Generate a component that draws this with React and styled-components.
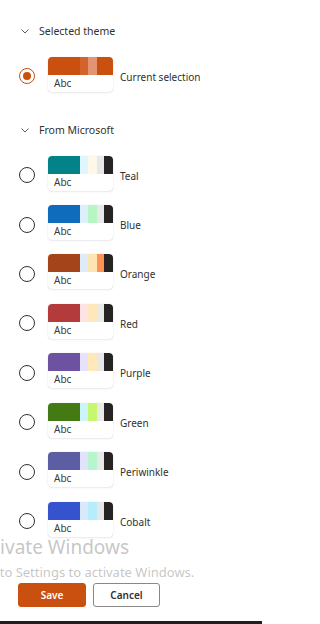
import React from "react";
import styled, { createGlobalStyle } from "styled-components";

const Global = createGlobalStyle`
  html, body {
    margin: 0;
    padding: 0;
    background: #ffffff;
    overflow: hidden;
  }
  body {
    font-family: "Noto Sans", "Open Sans", sans-serif;
    color: #323130;
  }
`;

const Page = styled.div`
  position: relative;
  width: 262px;
  height: 624px;
  overflow: hidden;
  background: #fff;
  display: flex;
  flex-direction: column;
`;

const Body = styled.div`
  flex: 1;
  padding: 21px 0 0 0;
`;

const SectionHead = styled.div`
  display: flex;
  align-items: center;
  height: 20px;
  padding-left: 20px;
  gap: 9px;
  font-size: 10.5px;
  color: #323130;
  margin-top: ${(p) => p.$top || 0}px;
`;

const Chevron = () => (
  <svg width="10" height="10" viewBox="0 0 10 10">
    <path d="M1.5 3.5 L5 7 L8.5 3.5" fill="none" stroke="#605e5c" strokeWidth="1" />
  </svg>
);

const List = styled.div`
  display: flex;
  flex-direction: column;
  margin-top: ${(p) => p.$top || 0}px;
`;

const Row = styled.div`
  display: flex;
  align-items: center;
  height: 49.43px;
  flex-shrink: 0;
  padding-left: 19px;
`;

const Radio = styled.span`
  width: 16px;
  height: 16px;
  box-sizing: border-box;
  border-radius: 50%;
  border: 1px solid ${(p) => (p.$checked ? "#ca5010" : "#323130")};
  display: flex;
  align-items: center;
  justify-content: center;
  margin-right: 13px;
  margin-top: 3px;
  &::after {
    content: "";
    display: ${(p) => (p.$checked ? "block" : "none")};
    width: 8px;
    height: 8px;
    border-radius: 50%;
    background: #ca5010;
  }
`;

const Card = styled.div`
  width: 65px;
  height: 35px;
  box-sizing: border-box;
  border-radius: 4px;
  background: #fff;
  box-shadow: 0 0 1px rgba(0, 0, 0, 0.18), 0 1px 2px rgba(0, 0, 0, 0.08);
  overflow: hidden;
  display: flex;
  flex-direction: column;
  margin-top: -1px;
`;

const Swatch = styled.div`
  display: grid;
  grid-template-columns: 32px 8px 9px 7px 1fr;
  height: 18px;
`;

const Stripe = styled.span`
  background: ${(p) => p.$c};
  border-top-right-radius: ${(p) => (p.$last ? "3px" : "0")};
  border-top-left-radius: ${(p) => (p.$first ? "3px" : "0")};
`;

const Abc = styled.span`
  font-size: 10px;
  line-height: 17px;
  padding-left: 6px;
  color: #3b3a39;
`;

const Label = styled.span`
  font-size: 10px;
  margin-left: 7px;
  margin-top: 4px;
  color: #323130;
`;

const Footer = styled.div`
  display: flex;
  gap: 7px;
  padding: 0 0 14px 18px;
`;

const Button = styled.button`
  width: ${(p) => (p.$primary ? "68px" : "67px")};
  height: 24px;
  box-sizing: border-box;
  border-radius: 3px;
  font-family: "Noto Sans", "Open Sans", sans-serif;
  font-size: 10px;
  font-weight: 600;
  cursor: pointer;
  background: ${(p) => (p.$primary ? "#ca5010" : "#ffffff")};
  color: ${(p) => (p.$primary ? "#ffffff" : "#323130")};
  border: 1px solid ${(p) => (p.$primary ? "#ca5010" : "#8a8886")};
`;

const Taskbar = styled.div`
  height: 3px;
  background: #1f1f1f;
`;

// windows activation watermark sits over the page, clipped at the left edge
const Watermark = styled.div`
  position: absolute;
  left: -28px;
  top: 538px;
  color: rgba(150, 150, 150, 0.55);
  pointer-events: none;
  font-family: "Noto Sans", "Open Sans", sans-serif;
  line-height: 1;
  white-space: nowrap;
`;

const WmTitle = styled.div`
  font-size: 19px;
`;

const WmSub = styled.div`
  font-size: 13px;
  margin-top: 9px;
  margin-left: 7px;
`;

const themes = [
  { name: "Teal", c: ["#038387", "#dff6fd", "#fff8e8", "#e8e8e8", "#252423"] },
  { name: "Blue", c: ["#0f6cbd", "#ddeefc", "#b7f5c3", "#e8e8e8", "#252423"] },
  { name: "Orange", c: ["#a4441a", "#ddecf9", "#ffe4b3", "#ff9356", "#252423"] },
  { name: "Red", c: ["#b33b3b", "#fde3e5", "#ffe7bc", "#e9e9e9", "#252423"] },
  { name: "Purple", c: ["#6d52a1", "#e7e2fb", "#ffe8ba", "#e8e8e8", "#252423"] },
  { name: "Green", c: ["#437a14", "#cbf5fb", "#c7f76c", "#e9e9e9", "#252423"] },
  { name: "Periwinkle", c: ["#5b5ea2", "#e1e3fc", "#b7f6cc", "#e8e8e8", "#252423"] },
  { name: "Cobalt", c: ["#3553cf", "#d9e9fb", "#b5edfb", "#e6e6e6", "#252423"] },
];

const current = ["#ca5010", "#d4632b", "#e19572", "#ca5010", "#ca5010"];

const ThemeCard = ({ colors }) => (
  <Card>
    <Swatch>
      {colors.map((c, i) => (
        <Stripe key={i} $c={c} $first={i === 0} $last={i === colors.length - 1} />
      ))}
    </Swatch>
    <Abc>Abc</Abc>
  </Card>
);

const App = () => {
  return (
    <>
      <Global />
      <Page>
        <Body>
          <SectionHead>
            <Chevron />
            Selected theme
          </SectionHead>
          <List $top={9}>
            <Row>
              <Radio $checked />
              <ThemeCard colors={current} />
              <Label>Current selection</Label>
            </Row>
          </List>
          <SectionHead $top={20.5}>
            <Chevron />
            From Microsoft
          </SectionHead>
          <List $top={9}>
            {themes.map((t) => (
              <Row key={t.name}>
                <Radio />
                <ThemeCard colors={t.c} />
                <Label>{t.name}</Label>
              </Row>
            ))}
          </List>
        </Body>
        <Footer>
          <Button $primary>Save</Button>
          <Button>Cancel</Button>
        </Footer>
        <Taskbar />
        <Watermark>
          <WmTitle>Activate Windows</WmTitle>
          <WmSub>Go to Settings to activate Windows.</WmSub>
        </Watermark>
      </Page>
    </>
  );
};

export default App;
